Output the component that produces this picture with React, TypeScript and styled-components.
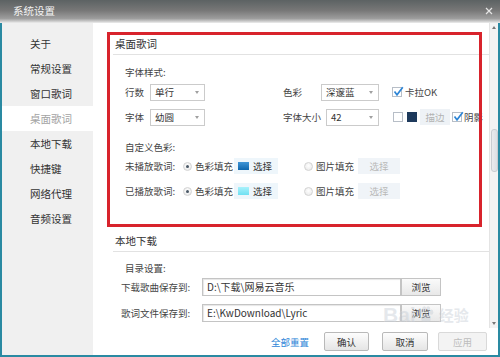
import React from 'react';
import styled, { createGlobalStyle } from 'styled-components';

const GlobalStyle = createGlobalStyle`
  html, body {
    margin: 0;
    padding: 0;
    background: #fff;
  }
  body {
    font-family: "Noto Sans CJK SC", "Noto Sans", sans-serif;
  }
`;

const FRAME = '#2a8aa2';

const Window = styled.div`
  position: relative;
  width: 500px;
  height: 357px;
  display: flex;
  flex-direction: column;
  overflow: hidden;
  background: #fff;
`;

const TitleBar = styled.div`
  flex: none;
  height: 23px;
  box-sizing: border-box;
  display: flex;
  align-items: center;
  justify-content: space-between;
  padding: 0 7px 2px 13px;
  background: linear-gradient(#5c6263 0%, #777 45%, #9c9c9c 80%, #c9c9c9 92%, #eeeeee 100%);
  color: #f4f4f4;
  font-size: 10.5px;
`;

const Body = styled.div`
  flex: 1;
  display: flex;
  min-height: 0;
  border: 2px solid ${FRAME};
  border-top: 0;
`;

const Sidebar = styled.nav`
  flex: none;
  width: 91px;
  padding-top: 8px;
  box-sizing: border-box;
  background: #f0f0f0;
`;

const NavItem = styled.div<{ $active?: boolean }>`
  height: 25px;
  line-height: 25px;
  padding-left: 28px;
  font-size: 10.5px;
  color: ${({ $active }) => ($active ? '#a3a3a3' : '#333')};
  background: ${({ $active }) => ($active ? '#fff' : 'transparent')};
`;

const Main = styled.div`
  flex: 1;
  min-width: 0;
  display: flex;
  flex-direction: column;
`;

const ScrollArea = styled.div`
  flex: none;
  height: 305px;
  display: flex;
`;

const Content = styled.div`
  position: relative;
  flex: 1;
  min-width: 0;
  overflow: hidden;
`;

const Scrollbar = styled.div`
  flex: none;
  width: 9px;
  display: flex;
  flex-direction: column;
  align-items: center;
  background: #f3f3f3;
  border-left: 1px solid #e4e4e4;
  box-sizing: border-box;
`;

const ScrollArrow = styled.div<{ $down?: boolean }>`
  flex: none;
  margin: 3px 0;
  width: 0;
  height: 0;
  border-left: 2.5px solid transparent;
  border-right: 2.5px solid transparent;
  ${({ $down }) => ($down ? 'border-top: 3px solid #777;' : 'border-bottom: 3px solid #777;')}
`;

const ScrollTrack = styled.div`
  flex: 1;
  width: 100%;
  display: flex;
  flex-direction: column;
  align-items: center;
`;

const ScrollThumb = styled.div<{ $offset: number }>`
  margin-top: ${({ $offset }) => $offset}px;
  width: 7px;
  height: 43px;
  border-radius: 3px;
  border: 1px solid #c9cdd2;
  box-sizing: border-box;
  background: linear-gradient(90deg, #e9ebee, #dcdfe3);
`;

const SectionHeader = styled.div<{ $top?: number }>`
  margin: ${({ $top = 0 }) => $top}px 0 0 20px;
  padding: 13px 0 2px 2px;
  line-height: 16px;
  font-size: 10.5px;
  color: #333;
  border-bottom: 1px solid #e2e2e2;
`;

const Caption = styled.div<{ $top: number }>`
  margin-top: ${({ $top }) => $top}px;
  padding-left: 32px;
  line-height: 16px;
  font-size: 9.5px;
  color: #444;
`;

const Row = styled.div<{ $top: number; $indent?: number }>`
  display: flex;
  align-items: center;
  height: 18px;
  margin-top: ${({ $top }) => $top}px;
  padding-left: ${({ $indent = 32 }) => $indent}px;
  font-size: 9.5px;
  color: #444;
  white-space: nowrap;
`;

const Field = styled.div<{ $w?: number }>`
  flex: none;
  display: flex;
  align-items: center;
  ${({ $w }) => ($w ? `width: ${$w}px;` : '')}
`;

const Label = styled.span<{ $w: number }>`
  flex: none;
  width: ${({ $w }) => $w}px;
  white-space: nowrap;
`;

const Select = styled.div<{ $w: number }>`
  position: relative;
  flex: none;
  width: ${({ $w }) => $w}px;
  height: 17px;
  box-sizing: border-box;
  padding-left: 4px;
  border: 1px solid #cbcbcb;
  background: #fff;
  line-height: 15px;
  font-size: 9.5px;
  color: #333;
  &::after {
    content: '';
    position: absolute;
    right: 5px;
    top: 6px;
    border-left: 2.5px solid transparent;
    border-right: 2.5px solid transparent;
    border-top: 3px solid #a0a0a0;
  }
`;

const Gap = styled.span<{ $w: number }>`
  flex: none;
  width: ${({ $w }) => $w}px;
`;

const CheckBox = styled.span`
  position: relative;
  flex: none;
  width: 10px;
  height: 10px;
  box-sizing: border-box;
  border: 1px solid #b7bec7;
  background: #fff;
  & svg {
    position: absolute;
    left: 0;
    top: -2px;
  }
`;

const Check = ({ checked }: { checked?: boolean }) => (
  <CheckBox>
    {checked && (
      <svg width="11" height="11" viewBox="0 0 11 11">
        <path d="M1.5 5.5 L4 8.8 L9.8 1.2" fill="none" stroke="#2f86d6" strokeWidth="1.7" />
      </svg>
    )}
  </CheckBox>
);

const Swatch = styled.span<{ $color: string; $w?: number; $h?: number }>`
  flex: none;
  width: ${({ $w = 10 }) => $w}px;
  height: ${({ $h = 10 }) => $h}px;
  background: ${({ $color }) => $color};
`;

const Chip = styled.span<{ $w: number }>`
  flex: none;
  width: ${({ $w }) => $w}px;
  height: 16px;
  line-height: 16px;
  text-align: center;
  background: #eef2f6;
  color: #b2b2b2;
`;

const Radio = styled.span<{ $checked?: boolean }>`
  position: relative;
  flex: none;
  width: 9px;
  height: 9px;
  box-sizing: border-box;
  border-radius: 50%;
  border: 1px solid #d3d3d3;
  background: radial-gradient(circle at 50% 40%, #ffffff, #e6e6e6);
  &::after {
    content: '';
    display: ${({ $checked }) => ($checked ? 'block' : 'none')};
    position: absolute;
    left: 2px;
    top: 2px;
    width: 3px;
    height: 3px;
    border-radius: 50%;
    background: #4a5866;
  }
`;

const PickButton = styled.span<{ $w: number; $disabled?: boolean }>`
  flex: none;
  display: flex;
  align-items: center;
  justify-content: ${({ $disabled }) => ($disabled ? 'center' : 'flex-start')};
  gap: 4px;
  width: ${({ $w }) => $w}px;
  height: 16px;
  box-sizing: border-box;
  padding-left: ${({ $disabled }) => ($disabled ? 0 : 4)}px;
  background: ${({ $disabled }) => ($disabled ? '#f0f4f8' : '#eef6fb')};
  color: ${({ $disabled }) => ($disabled ? '#b9b9b9' : '#333')};
`;

const PathInput = styled.div`
  flex: none;
  width: 199px;
  height: 18px;
  box-sizing: border-box;
  padding-left: 4px;
  border: 1px solid #c4c4c4;
  box-shadow: inset 1px 1px 1px #e6e6e6;
  background: #fff;
  line-height: 16px;
  font-size: 10px;
  color: #333;
`;

const Button = styled.button<{ $w: number }>`
  flex: none;
  width: ${({ $w }) => $w}px;
  height: 19px;
  padding: 0;
  border: 1px solid #b9b9b9;
  border-radius: 2px;
  background: linear-gradient(#fdfdfd, #e5e5e5);
  font-family: inherit;
  font-size: 9.5px;
  color: #333;
  &:disabled {
    border-color: #d9d9d9;
    background: #f3f3f3;
    color: #bdbdbd;
  }
`;

const BrowseButton = styled(Button)`
  height: 18px;
  border-radius: 0;
  border-color: #c4c4c4;
  background: linear-gradient(#fafafa, #e8e8e8);
`;

const Footer = styled.div`
  flex: 1;
  display: flex;
  align-items: center;
  justify-content: flex-end;
  padding-right: 11px;
  font-size: 9.5px;
`;

const ResetLink = styled.span`
  margin-right: 15px;
  color: #2e86d8;
`;

const Highlight = styled.div`
  position: absolute;
  left: 14px;
  top: 9px;
  width: 375px;
  height: 195px;
  box-sizing: border-box;
  border: 3px solid #d8232c;
  pointer-events: none;
`;

const Watermark = styled.div`
  position: absolute;
  left: 383px;
  top: 304px;
  display: flex;
  align-items: center;
  gap: 2px;
  opacity: 0.45;
  color: #c7ced6;
  font-family: "Liberation Sans", Arial, sans-serif;
  font-weight: bold;
  pointer-events: none;
  text-shadow: 0 0 1px #fff;
`;

const WatermarkWord = styled.span<{ $size: number }>`
  font-size: ${({ $size }) => $size}px;
  line-height: 1;
`;

const WatermarkCn = styled.span`
  font-family: "Noto Sans CJK SC", sans-serif;
  font-size: 15px;
  margin-left: 3px;
`;

const Paw = () => (
  <svg width="16" height="17" viewBox="0 0 16 17">
    <g fill="#c7ced6">
      <ellipse cx="3" cy="6" rx="2" ry="2.6" />
      <ellipse cx="6.3" cy="2.8" rx="2" ry="2.6" />
      <ellipse cx="10.2" cy="2.8" rx="2" ry="2.6" />
      <ellipse cx="13.3" cy="6.2" rx="2" ry="2.6" />
      <path d="M8 7.5 C5 7.5 2.5 12 3.5 14.5 C4.5 16.5 7 15.5 8 15.5 C9 15.5 11.5 16.5 12.5 14.5 C13.5 12 11 7.5 8 7.5 Z" />
    </g>
  </svg>
);

const navItems = ['关于', '常规设置', '窗口歌词', '桌面歌词', '本地下载', '快捷键', '网络代理', '音频设置'];

const App = () => {
  return (
    <Window>
      <GlobalStyle />
      <TitleBar>
        <span>系统设置</span>
        <svg width="8" height="8" viewBox="0 0 8 8">
          <path d="M1 1 L7 7 M7 1 L1 7" stroke="#e6e6e6" strokeWidth="1.2" />
        </svg>
      </TitleBar>
      <Body>
        <Sidebar>
          {navItems.map((item) => (
            <NavItem key={item} $active={item === '桌面歌词'}>
              {item}
            </NavItem>
          ))}
        </Sidebar>
        <Main>
          <ScrollArea>
            <Content>
              <SectionHeader>桌面歌词</SectionHeader>
              <Caption $top={9}>字体样式:</Caption>
              <Row $top={3}>
                <Field $w={158}>
                  <Label $w={25}>行数</Label>
                  <Select $w={55}>单行</Select>
                </Field>
                <Field>
                  <Label $w={38}>色彩</Label>
                  <Select $w={58}>深邃蓝</Select>
                </Field>
                <Gap $w={13} />
                <Check checked />
                <Gap $w={3} />
                <span>卡拉OK</span>
              </Row>
              <Row $top={7}>
                <Field $w={158}>
                  <Label $w={25}>字体</Label>
                  <Select $w={55}>幼圆</Select>
                </Field>
                <Field>
                  <Label $w={43}>字体大小</Label>
                  <Select $w={53}>42</Select>
                </Field>
                <Gap $w={14} />
                <Check />
                <Gap $w={4} />
                <Swatch $color="#1e3a5c" />
                <Gap $w={3} />
                <Chip $w={30}>描边</Chip>
                <Gap $w={2} />
                <Check checked />
                <Gap $w={2} />
                <span>阴影</span>
              </Row>
              <Caption $top={13}>自定义色彩:</Caption>
              <Row $top={2}>
                <Label $w={58}>未播放歌词:</Label>
                <Radio $checked />
                <Gap $w={3} />
                <Label $w={39}>色彩填充</Label>
                <PickButton $w={44}>
                  <Swatch $color="linear-gradient(#3f95d6, #0e66ad)" $w={11} $h={8} />
                  选择
                </PickButton>
                <Gap $w={26} />
                <Radio />
                <Gap $w={3} />
                <Label $w={42}>图片填充</Label>
                <PickButton $w={42} $disabled>
                  选择
                </PickButton>
              </Row>
              <Row $top={7}>
                <Label $w={58}>已播放歌词:</Label>
                <Radio $checked />
                <Gap $w={3} />
                <Label $w={39}>色彩填充</Label>
                <PickButton $w={44}>
                  <Swatch $color="linear-gradient(#a9f1fb, #6fe0f2)" $w={11} $h={8} />
                  选择
                </PickButton>
                <Gap $w={26} />
                <Radio />
                <Gap $w={3} />
                <Label $w={42}>图片填充</Label>
                <PickButton $w={42} $disabled>
                  选择
                </PickButton>
              </Row>
              <SectionHeader $top={20}>本地下载</SectionHeader>
              <Caption $top={8}>目录设置:</Caption>
              <Row $top={2} $indent={28}>
                <Label $w={81}>下载歌曲保存到:</Label>
                <PathInput>D:\下载\网易云音乐</PathInput>
                <BrowseButton $w={40}>浏览</BrowseButton>
              </Row>
              <Row $top={8} $indent={28}>
                <Label $w={81}>歌词文件保存到:</Label>
                <PathInput>E:\KwDownload\Lyric</PathInput>
                <BrowseButton $w={40}>浏览</BrowseButton>
              </Row>
              <Highlight />
            </Content>
            <Scrollbar>
              <ScrollArrow />
              <ScrollTrack>
                <ScrollThumb $offset={97} />
              </ScrollTrack>
              <ScrollArrow $down />
            </Scrollbar>
          </ScrollArea>
          <Footer>
            <ResetLink>全部重置</ResetLink>
            <Button $w={45}>确认</Button>
            <Gap $w={13} />
            <Button $w={46}>取消</Button>
            <Gap $w={10} />
            <Button $w={49} disabled>
              应用
            </Button>
          </Footer>
        </Main>
      </Body>
      <Watermark>
        <WatermarkWord $size={21}>Bai</WatermarkWord>
        <Paw />
        <WatermarkCn>经验</WatermarkCn>
      </Watermark>
    </Window>
  );
};

export default App;
